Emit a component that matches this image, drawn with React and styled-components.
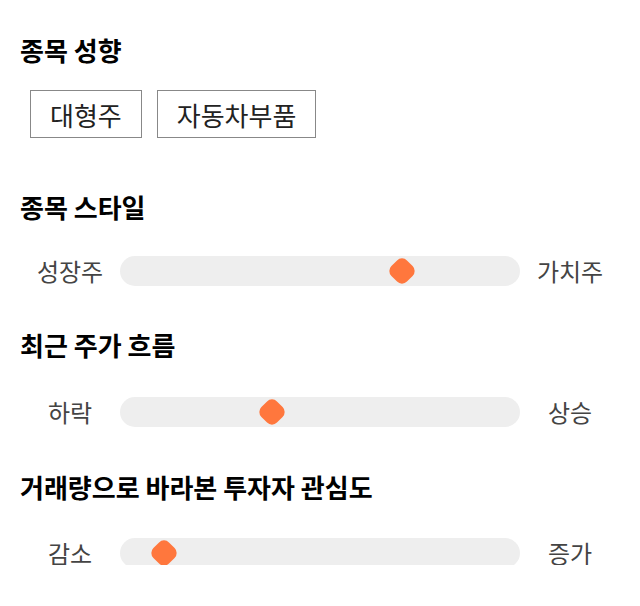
import React from "react";
import styled, { createGlobalStyle } from "styled-components";

const Global = createGlobalStyle`
  html, body { margin: 0; padding: 0; background: #fff; }
  body { font-family: "Noto Sans CJK KR", "Noto Sans", sans-serif; }
`;

const Page = styled.div`
  width: 640px;
  box-sizing: border-box;
  padding: 34px 20px 0 20px;
`;

const Section = styled.section`
  margin-bottom: ${(p) => p.$after}px;
`;

const Title = styled.h2`
  margin: 0 0 ${(p) => p.$gap}px 0;
  font-size: 26px;
  line-height: 32px;
  font-weight: 700;
  color: #000;
`;

const ChipRow = styled.div`
  display: flex;
  gap: 15px;
  padding-left: 10px;
`;

const Chip = styled.div`
  box-sizing: border-box;
  height: 48px;
  padding: 0 19px;
  border: 1px solid #888;
  display: flex;
  align-items: center;
  font-size: 26px;
  color: #222;
`;

const SliderRow = styled.div`
  display: grid;
  grid-template-columns: 100px 1fr 100px;
  align-items: center;
  height: 30px;
`;

const Label = styled.div`
  text-align: center;
  font-size: 24px;
  color: #444;
`;

const Track = styled.div`
  position: relative;
  height: 30px;
  border-radius: 15px;
  background: #eeeeee;
`;

const Thumb = styled.div`
  position: absolute;
  top: 50%;
  width: 22px;
  height: 22px;
  border-radius: 7px;
  background: #ff773d;
  transform: translate(-50%, -50%) rotate(45deg);
`;

const Slider = ({ left, right, value }) => (
  <SliderRow>
    <Label>{left}</Label>
    <Track>
      <Thumb style={{ left: `${value}%` }} />
    </Track>
    <Label>{right}</Label>
  </SliderRow>
);

export default function App() {
  return (
    <>
      <Global />
      <Page>
        <Section $after={53}>
          <Title $gap={24}>종목 성향</Title>
          <ChipRow>
            <Chip>대형주</Chip>
            <Chip>자동차부품</Chip>
          </ChipRow>
        </Section>
        <Section $after={46}>
          <Title $gap={30}>종목 스타일</Title>
          <Slider left="성장주" right="가치주" value={70.5} />
        </Section>
        <Section $after={47}>
          <Title $gap={33}>최근 주가 흐름</Title>
          <Slider left="하락" right="상승" value={38} />
        </Section>
        <Section $after={0}>
          <Title $gap={32}>거래량으로 바라본 투자자 관심도</Title>
          <Slider left="감소" right="증가" value={11} />
        </Section>
      </Page>
    </>
  );
}
